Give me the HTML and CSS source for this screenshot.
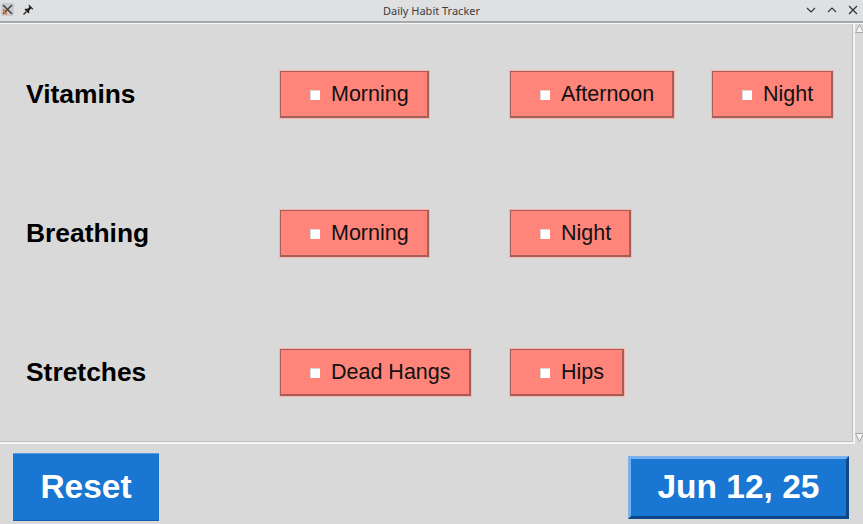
FILE: index.html
```html
<!DOCTYPE html>
<html>
<head>
<meta charset="utf-8">
<title>Daily Habit Tracker</title>
<link rel="stylesheet" href="styles.css">
</head>
<body>
<div class="window">
  <header class="titlebar">
    <div class="tb-left">
      <svg class="app-icon" width="13" height="13" viewBox="0 0 13 13">
        <rect x="0" y="0" width="13" height="13" rx="2" fill="#c9cacc"/>
        <path d="M2 2 L11 11 M11 2 L2 11" stroke="#444" stroke-width="1.6"/>
        <path d="M3 6 Q2 10 6 11" stroke="#e07030" stroke-width="1.8" fill="none"/>
      </svg>
      <svg class="pin-icon" width="11" height="11" viewBox="0 0 11 11">
        <path d="M6 0.5 L10.5 5 L9.5 5.5 L8 4.5 L6 7 L6.5 8.5 L5.5 9.5 L1.5 5.5 L2.5 4.5 L4 5 L6.5 3 L5.5 1.5 Z" fill="#222"/>
        <path d="M3.5 7.5 L0.5 10.5" stroke="#222" stroke-width="1.2"/>
      </svg>
    </div>
    <div class="title">Daily Habit Tracker</div>
    <div class="tb-right">
      <svg width="10" height="10" viewBox="0 0 10 10"><path d="M1 3 L5 7 L9 3" stroke="#333" stroke-width="1.1" fill="none"/></svg>
      <svg width="10" height="10" viewBox="0 0 10 10"><path d="M1 7 L5 3 L9 7" stroke="#333" stroke-width="1.1" fill="none"/></svg>
      <svg width="10" height="10" viewBox="0 0 10 10"><path d="M1 1 L9 9 M9 1 L1 9" stroke="#333" stroke-width="1.2"/></svg>
    </div>
  </header>

  <div class="main">
    <div class="canvas">
      <div class="habits">
        <div class="label">Vitamins</div>
        <div class="check"><span class="box"></span>Morning</div>
        <div class="check"><span class="box"></span>Afternoon</div>
        <div class="check"><span class="box"></span>Night</div>

        <div class="label">Breathing</div>
        <div class="check"><span class="box"></span>Morning</div>
        <div class="check"><span class="box"></span>Night</div>
        <div class="empty"></div>

        <div class="label">Stretches</div>
        <div class="check"><span class="box"></span>Dead Hangs</div>
        <div class="check"><span class="box"></span>Hips</div>
        <div class="empty"></div>
      </div>
    </div>
    <div class="scrollbar">
      <svg class="arrow" width="9" height="9" viewBox="0 0 9 9"><path d="M0.5 8.5 L4.5 0.5 L8.5 8.5 Z" fill="#f4f4f4" stroke="#a8a8a8" stroke-width="1"/></svg>
      <svg class="arrow" width="9" height="9" viewBox="0 0 9 9"><path d="M0.5 0.5 L4.5 8.5 L8.5 0.5 Z" fill="#f4f4f4" stroke="#a8a8a8" stroke-width="1"/></svg>
    </div>
  </div>

  <footer class="footer">
    <button class="btn-reset">Reset</button>
    <button class="btn-date">Jun 12, 25</button>
  </footer>
</div>
</body>
</html>
```
FILE: styles.css
```css
* { box-sizing: border-box; }

html, body {
  margin: 0;
  padding: 0;
  width: 863px;
  height: 524px;
  overflow: hidden;
  background: #d9d9d9;
}

.window {
  width: 863px;
  height: 524px;
  display: flex;
  flex-direction: column;
}

.titlebar {
  height: 24px;
  flex: none;
  background: #dfe0e2;
  border-bottom: 1px solid #f6f6f6;
  box-shadow: inset 0 -2px 0 #a9aaac;
  display: flex;
  align-items: center;
  justify-content: space-between;
  position: relative;
  padding: 0 5px 2px 1px;
}

.tb-left {
  display: flex;
  align-items: center;
  gap: 9px;
  margin-top: -2px;
}

.title {
  position: absolute;
  left: 0;
  right: 0;
  top: 3px;
  text-align: center;
  font-family: "Noto Sans", "Open Sans", sans-serif;
  font-size: 11px;
  color: #3b3b3b;
  pointer-events: none;
}

.tb-right {
  display: flex;
  align-items: center;
  gap: 11px;
  margin-top: -2px;
}

.main {
  height: 420px;
  flex: none;
  display: flex;
}

.canvas {
  width: 855px;
  height: 420px;
  background: #d9d9d9;
  border-right: 2px solid #f4f4f4;
  border-bottom: 2px solid #f4f4f4;
  box-shadow: inset -1px -1px 0 #bdbdbd;
  padding: 46px 0 0 26px;
}

.habits {
  display: grid;
  grid-template-columns: 253px 230px 202px auto;
  row-gap: 90px;
  justify-content: start;
  align-items: center;
}

.label {
  font-family: "Liberation Sans", Arial, sans-serif;
  font-weight: bold;
  font-size: 26.4px;
  color: #000;
}

.check {
  justify-self: start;
  height: 49px;
  display: flex;
  align-items: center;
  padding: 0 20px 0 30px;
  background: #ff857b;
  border: 1px solid #f9b4ac;
  box-shadow: inset 0 0 0 1px #a55e59, inset -1px -1px 0 1px #a55e59;
  font-family: "Liberation Sans", Arial, sans-serif;
  font-size: 21.5px;
  color: #111;
}

.box {
  width: 10px;
  height: 10px;
  background: #fff;
  box-shadow: inset 1px 1px 0 #d8d8d8;
  margin-right: 11px;
  flex: none;
}

.scrollbar {
  width: 8px;
  height: 420px;
  display: flex;
  flex-direction: column;
  justify-content: space-between;
  align-items: center;
  padding: 0 0 2px 0;
  background: #d9d9d9;
}

.arrow { display: block; }

.footer {
  flex: 1;
  display: flex;
  align-items: center;
  justify-content: space-between;
  padding: 6px 14px 0 13px;
}

.btn-reset {
  width: 146px;
  height: 68px;
  background: #1976d2;
  border: none;
  border-top: 1px solid #4f97e0;
  border-bottom: 1px solid #135fae;
  color: #fff;
  font-family: "Liberation Sans", Arial, sans-serif;
  font-weight: bold;
  font-size: 33.5px;
  padding: 0;
}

.btn-date {
  width: 221px;
  height: 63px;
  background: #1976d2;
  border: 3px solid;
  border-color: #79b0ee #0c4888 #0c4888 #79b0ee;
  color: #fff;
  font-family: "Liberation Sans", Arial, sans-serif;
  font-weight: bold;
  font-size: 33.5px;
  padding: 0;
}
```
